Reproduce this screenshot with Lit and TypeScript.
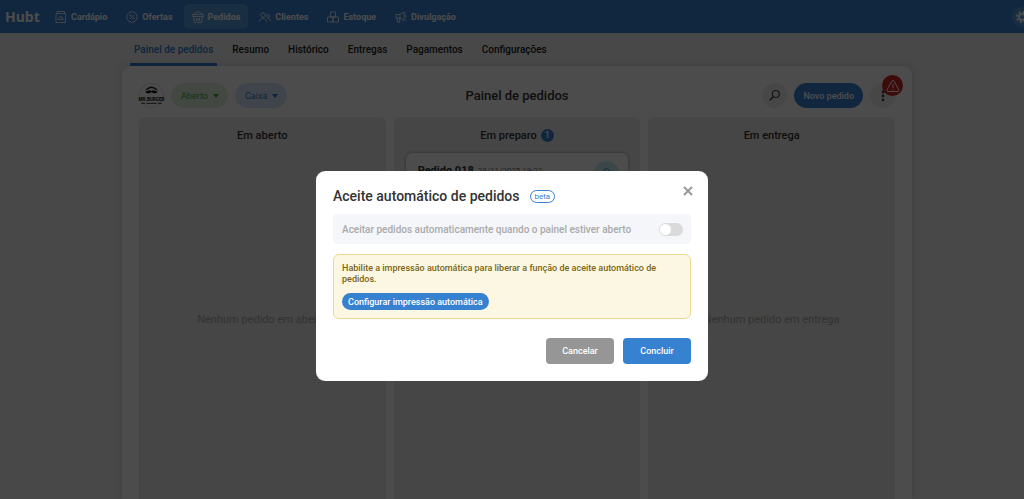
import { LitElement, html, css, svg, nothing } from "lit";
import { customElement } from "lit/decorators.js";
import { classMap } from "lit/directives/class-map.js";

const icons = {
  menu: svg`<path d="M2 5h19v18H2zM4 5V1h15v4"/><path d="M6 17h11M7 16a4.500 4.500 0 0 1 9 0M11.500 11.500v-1"/>`,
  offers: svg`<circle cx="12" cy="12" r="10.500"/><path d="M8 16l8-8"/><circle cx="8.500" cy="9" r="1.500"/><circle cx="15.500" cy="15" r="1.500"/>`,
  orders: svg`<path d="M1 7h22v4H1zM3 11l2 12h14l2-12M5 7V4h3c0-3 8-3 8 0h3v3M9 14v6M12 14v6M15 14v6"/>`,
  clients: svg`<circle cx="8" cy="8" r="4.500"/><path d="M1 22c0-4 3-7 7-7s7 3 7 7"/><circle cx="18.500" cy="10" r="3"/><path d="M17 15c4 0 6 2 6 6"/>`,
  stock: svg`<path d="M7 2h10v10H7zM1 12h11v10H1zM12 12h11v10H12z"/>`,
  promo: svg`<path d="M2 7h8l8-5v17l-8-5H2zM4 14l1 8h5l-1-8M10 7v7M20 7c3 1 3 6 0 7M21 3l2-1M21 18l2 1"/>`,
};

const navItems: { label: string; icon: keyof typeof icons; active?: boolean }[] = [
  { label: "Cardápio", icon: "menu" },
  { label: "Ofertas", icon: "offers" },
  { label: "Pedidos", icon: "orders", active: true },
  { label: "Clientes", icon: "clients" },
  { label: "Estoque", icon: "stock" },
  { label: "Divulgação", icon: "promo" },
];

const tabs = ["Painel de pedidos", "Resumo", "Histórico", "Entregas", "Pagamentos", "Configurações"];

@customElement("orders-board")
export class OrdersBoard extends LitElement {
  static styles = css`
    :host { display: flex; flex-direction: column; flex: 1; color: #333; }
    * { box-sizing: border-box; }
    button { font: inherit; border: 0; padding: 0; color: inherit; }
    .toolbar { display: grid; grid-template-columns: 1fr auto 1fr; align-items: center; height: 25px; margin-bottom: 9px; }
    .group { display: flex; align-items: center; gap: 7px; }
    .end { justify-content: flex-end; }
    .brand { width: 25px; height: 25px; border: 1px solid #ddd; border-radius: 50%; overflow: visible; }
    .chip { display: flex; align-items: center; gap: 5px; height: 25px; padding: 0 9px 0 10px; border-radius: 13px; font-size: 9px; font-weight: 400; }
    .chip::after { content: ""; border: 3px solid transparent; border-top: 4px solid currentColor; border-bottom: 0; }
    .open { background: #e1f2dd; color: #40a92f; }
    .cash { background: #d8e8fa; color: #2f7dd2; }
    h1 { margin: 0; font-size: 13px; line-height: 25px; font-weight: 500; }
    .round { position: relative; width: 25px; height: 25px; border-radius: 50%; background: #eee; display: grid; place-items: center; }
    .new { height: 25px; padding: 0 9px; border-radius: 13px; background: #3682d3; color: #fff; font-size: 9px; font-weight: 500; }
    .warn { position: absolute; top: -8px; right: -8px; width: 21px; height: 21px; border-radius: 50%; background: #d12626; display: grid; place-items: center; }
    .columns { flex: 1; display: grid; grid-template-columns: repeat(3, 1fr); gap: 8px; }
    .column { display: flex; flex-direction: column; background: #e9e9e9; border-radius: 6px 6px 0 0; padding: 0 12px 14px; }
    h2 { display: flex; justify-content: center; align-items: center; gap: 4px; height: 36px; margin: 0; font-size: 11px; font-weight: 500; }
    .count { width: 13px; height: 13px; border-radius: 50%; background: #2f7fd3; color: #fff; font-size: 9px; line-height: 13px; text-align: center; }
    .empty { flex: 1; display: grid; place-items: center; margin: 0; font-size: 11px; color: #aaa; }
    .order { display: flex; height: 120px; align-items: flex-start; padding: 8px 9px 8px 12px; border-radius: 6px; background: #fff; box-shadow: 0 0 3px #0006; }
    .order strong { font-size: 11px; line-height: 20px; font-weight: 700; }
    .order time { margin-left: 4px; font-size: 8px; line-height: 20px; color: #777; }
    .badge { margin-left: auto; width: 25px; height: 25px; border-radius: 50%; background: #c4ebf5; display: grid; place-items: center; }
  `;

  render() {
    return html`
      <div class="toolbar">
        <div class="group">
          <svg class="brand" viewBox="0 0 50 50" aria-label="Mr. Burger">
            <path d="M13 13Q25 1 37 13" fill="none" stroke="#222" stroke-width="3"/>
            <path d="M11 16c5 1 8-3 11-2 1 0 3 1 3 2 0-1 2-2 3-2 3-1 6 3 11 2-2 5-9 6-14 2-5 4-12 3-14-2z" fill="#111"/>
            <text x="25" y="36" text-anchor="middle" font-size="10" font-weight="700" fill="#111" font-family="Roboto, sans-serif">MR.BURGER</text>
            <path d="M3 42h8M39 42h8M14 42h22" stroke="#222" stroke-width="2"/>
          </svg>
          <button class="chip open">Aberto</button>
          <button class="chip cash">Caixa</button>
        </div>
        <h1>Painel de pedidos</h1>
        <div class="group end">
          <button class="round" aria-label="Buscar">
            <svg width="13" height="13" viewBox="0 0 13 13" fill="none" stroke="#444" stroke-width="1.200"><circle cx="7.800" cy="5" r="3.500"/><path d="M5.300 7.700L1.500 11.500" stroke-width="1.500"/></svg>
          </button>
          <button class="new">Novo pedido</button>
          <button class="round" aria-label="Mais opções">
            <svg width="4" height="12" viewBox="0 0 4 12" fill="#444"><circle cx="2" cy="2" r="1.400"/><circle cx="2" cy="6" r="1.400"/><circle cx="2" cy="10" r="1.400"/></svg>
            <span class="warn">
              <svg width="14" height="14" viewBox="0 0 14 14" fill="none" stroke="#fff" stroke-linejoin="round" stroke-linecap="round"><path d="M6.200 1.800Q7 .8 7.800 1.800L13 11Q13.300 12.500 12 12.500H2Q.7 12.500 1 11zM7 5v3.500M7 10.300v.2"/></svg>
            </span>
          </button>
        </div>
      </div>
      <div class="columns">
        <section class="column"><h2>Em aberto</h2><p class="empty">Nenhum pedido em aberto</p></section>
        <section class="column">
          <h2>Em preparo <span class="count">1</span></h2>
          <article class="order">
            <strong>Pedido 018</strong><time>28/11/2025 19:22</time>
            <span class="badge"><svg width="11" height="12" viewBox="0 0 11 12" fill="none" stroke="#32a7c4"><path d="M2 4h7v7H2zM3 4V3a2.500 2.500 0 0 1 5 0v1"/></svg></span>
          </article>
        </section>
        <section class="column"><h2>Em entrega</h2><p class="empty">Nenhum pedido em entrega</p></section>
      </div>
    `;
  }
}

@customElement("accept-dialog")
export class AcceptDialog extends LitElement {
  static styles = css`
    :host { position: fixed; inset: 0; display: grid; place-items: center; padding-top: 53px; box-sizing: border-box; background: rgba(0, 0, 0, 0.7); }
    * { box-sizing: border-box; }
    button { font: inherit; border: 0; padding: 0; color: inherit; }
    .dialog { position: relative; width: 392px; max-width: 94%; padding: 17px; border-radius: 9px; background: #fff; color: #333; }
    header { display: flex; align-items: center; gap: 10px; height: 17px; margin-bottom: 9px; }
    h2 { margin: 0; font-size: 14px; font-weight: 500; line-height: 17px; white-space: nowrap; }
    .beta { height: 13px; padding: 0 4px; border: 1px solid #3781d1; border-radius: 7px; color: #3781d1; font-size: 8px; line-height: 11px; }
    .close { position: absolute; top: 14px; right: 14px; width: 12px; height: 12px; display: grid; place-items: center; background: none; }
    .setting { display: flex; align-items: center; justify-content: space-between; height: 30px; margin-bottom: 10px; padding: 0 8px 0 9px; border-radius: 4px; background: #f4f6f9; color: #aaa; font-size: 10px; font-weight: 500; }
    .switch { appearance: none; margin: 0; width: 24px; height: 13px; padding: 1px; border-radius: 7px; background: #dadada; }
    .switch::before { content: ""; display: block; width: 11px; height: 11px; border-radius: 50%; background: #fff; }
    .notice { padding: 8px; border: 1px solid #ecd98f; border-radius: 6px; background: #fbf7e3; color: #7c6413; }
    p { margin: 0 0 8px; font-size: 9px; font-weight: 500; line-height: 11px; }
    .setup { display: block; height: 17px; padding: 0 6px; border-radius: 9px; background: #3781d1; color: #fff; font-size: 9px; font-weight: 500; }
    footer { display: flex; justify-content: flex-end; gap: 9px; margin-top: 19px; }
    .action { width: 68px; height: 26px; border-radius: 4px; background: #969696; color: #fff; font-size: 9px; font-weight: 500; }
    .primary { background: #3781d1; }
  `;

  render() {
    return html`
      <div class="dialog" role="dialog" aria-labelledby="title">
        <header><h2 id="title">Aceite automático de pedidos</h2><span class="beta">beta</span></header>
        <button class="close" aria-label="Fechar"><svg width="10" height="10" viewBox="0 0 10 10" stroke="#999" stroke-width="2"><path d="M1 1l8 8M9 1L1 9"/></svg></button>
        <div class="setting">
          <label for="auto">Aceitar pedidos automaticamente quando o painel estiver aberto</label>
          <input id="auto" class="switch" type="checkbox" role="switch" disabled>
        </div>
        <div class="notice">
          <p>Habilite a impressão automática para liberar a função de aceite automático de pedidos.</p>
          <button class="setup">Configurar impressão automática</button>
        </div>
        <footer><button class="action">Cancelar</button><button class="action primary">Concluir</button></footer>
      </div>
    `;
  }
}

@customElement("app-root")
export class AppRoot extends LitElement {
  static styles = css`
    :host { display: block; height: 100vh; overflow: hidden; font-family: Roboto, "Liberation Sans", sans-serif; }
    * { box-sizing: border-box; }
    a { color: inherit; text-decoration: none; }
    .page { display: flex; flex-direction: column; width: calc(100% + 10px); height: 100%; background: #f0f0f0; }
    .top { display: flex; align-items: center; height: 33px; padding: 0 2px 0 5px; background: #3782d3; color: #fff; }
    .logo { width: 42px; font: 700 14px/31px "Noto Sans", sans-serif; }
    nav { display: flex; }
    .main { flex: 1; gap: 3px; }
    .item { display: flex; align-items: center; gap: 4px; height: 25px; padding: 0 8px; border-radius: 5px; font-size: 9px; font-weight: 700; }
    .on { background: #5799dc; }
    .icon { width: 12px; height: 12px; fill: none; stroke: currentColor; stroke-width: 1.600; }
    .gear { width: 20px; height: 20px; padding: 0; border: 0; border-radius: 50%; background: #5799dc; display: grid; place-items: center; }
    .tabs { gap: 11px; width: 774px; margin: 0 auto; height: 33px; font-size: 10px; font-weight: 500; color: #222; }
    .tab { padding: 10px 4px 0; border-bottom: 3px solid transparent; border-radius: 2px 2px 0 0; line-height: 13px; }
    .current { color: #2f7dd2; border-color: #2f7dd2; }
    .board { display: flex; flex: 1; width: 790px; margin: 0 auto; padding: 17px 17px 0; border-radius: 9px 9px 0 0; background: #fff; box-shadow: 0 0 8px #0002; }
  `;

  render() {
    return html`
      <div class="page">
        <div class="top">
          <a class="logo" href="#">Hubt</a>
          <nav class="main">
            ${navItems.map((n) => html`
              <a href="#" class=${classMap({ item: true, on: !!n.active })} aria-current=${n.active ? "page" : nothing}>
                <svg class="icon" viewBox="0 0 24 24">${icons[n.icon]}</svg>${n.label}
              </a>`)}
          </nav>
          <button class="gear" aria-label="Ajustes">
            <svg width="12" height="12" viewBox="0 0 12 12" fill="none" stroke="#fff"><circle cx="6" cy="6" r="3" stroke-width="2"/><circle cx="6" cy="6" r="5" stroke-width="2" stroke-dasharray="2 1.930"/></svg>
          </button>
        </div>
        <nav class="tabs">
          ${tabs.map((t, i) => html`<a href="#" class=${classMap({ tab: true, current: i === 0 })}>${t}</a>`)}
        </nav>
        <main class="board"><orders-board></orders-board></main>
      </div>
      <accept-dialog></accept-dialog>
    `;
  }
}
